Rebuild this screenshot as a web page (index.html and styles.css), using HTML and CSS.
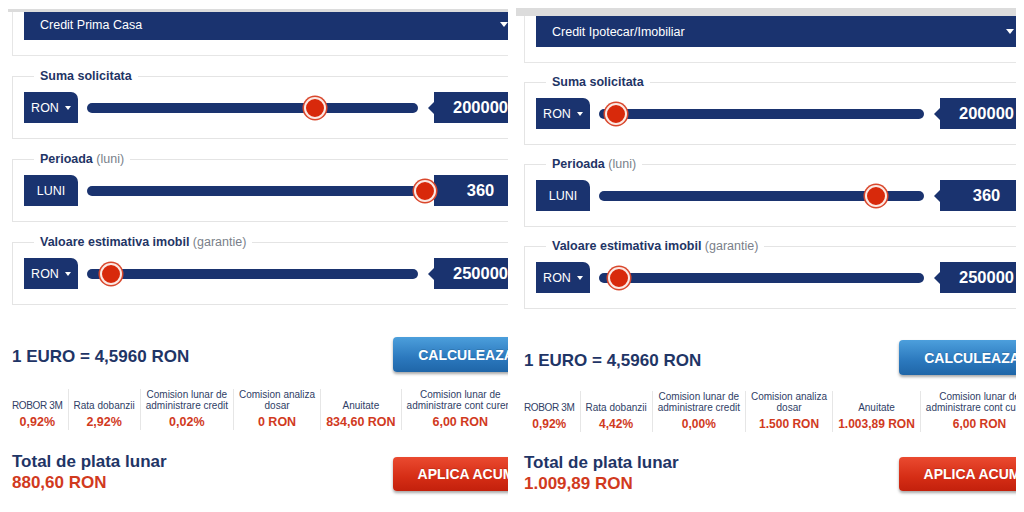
FILE: index.html
```html
<!DOCTYPE html>
<html lang="ro">
<head>
<meta charset="utf-8">
<title>Calculator credit</title>
<link rel="stylesheet" href="styles.css">
</head>
<body>
<div class="screen">
  <section class="panel panel--a">
    <div class="topbar"></div>
    <div class="calc">
      <div class="selectbox">
        <div class="select"><span>Credit Prima Casa</span><span class="select__arrow"></span></div>
      </div>
      <fieldset class="field">
        <legend><b>Suma solicitata</b></legend>
        <div class="slider-row">
          <div class="unit">RON <span class="caret"></span></div>
          <div class="track"><span class="thumb" style="left:68.9%"></span></div>
          <div class="value">200000</div>
        </div>
      </fieldset>
      <fieldset class="field">
        <legend><b>Perioada</b> <span class="muted">(luni)</span></legend>
        <div class="slider-row">
          <div class="unit">LUNI</div>
          <div class="track"><span class="thumb" style="left:102.1%"></span></div>
          <div class="value">360</div>
        </div>
      </fieldset>
      <fieldset class="field">
        <legend><b>Valoare estimativa imobil</b> <span class="muted">(garantie)</span></legend>
        <div class="slider-row">
          <div class="unit">RON <span class="caret"></span></div>
          <div class="track"><span class="thumb" style="left:7.3%"></span></div>
          <div class="value">250000</div>
        </div>
      </fieldset>
      <div class="rate-row">
        <div class="rate">1 EURO = 4,5960 RON</div>
        <button class="btn btn--blue">CALCULEAZA</button>
      </div>
      <div class="stats">
        <div class="stat"><div class="stat__label stat__label--tight">ROBOR 3M</div><div class="stat__val">0,92%</div></div>
        <div class="stat"><div class="stat__label">Rata dobanzii</div><div class="stat__val">2,92%</div></div>
        <div class="stat"><div class="stat__label">Comision lunar de<br>administrare credit</div><div class="stat__val">0,02%</div></div>
        <div class="stat"><div class="stat__label">Comision analiza<br>dosar</div><div class="stat__val">0 RON</div></div>
        <div class="stat"><div class="stat__label">Anuitate</div><div class="stat__val">834,60 RON</div></div>
        <div class="stat"><div class="stat__label">Comision lunar de<br>administrare cont curent</div><div class="stat__val">6,00 RON</div></div>
      </div>
      <div class="total-row">
        <div class="total">
          <div class="total__label">Total de plata lunar</div>
          <div class="total__val">880,60 RON</div>
        </div>
        <button class="btn btn--red">APLICA ACUM</button>
      </div>
    </div>
  </section>

  <section class="panel panel--b">
    <div class="topbar"></div>
    <div class="calc">
      <div class="selectbox">
        <div class="select"><span>Credit Ipotecar/Imobiliar</span><span class="select__arrow"></span></div>
      </div>
      <fieldset class="field">
        <legend><b>Suma solicitata</b></legend>
        <div class="slider-row">
          <div class="unit">RON <span class="caret"></span></div>
          <div class="track"><span class="thumb" style="left:5.2%"></span></div>
          <div class="value">200000</div>
        </div>
      </fieldset>
      <fieldset class="field">
        <legend><b>Perioada</b> <span class="muted">(luni)</span></legend>
        <div class="slider-row">
          <div class="unit">LUNI</div>
          <div class="track"><span class="thumb" style="left:85.3%"></span></div>
          <div class="value">360</div>
        </div>
      </fieldset>
      <fieldset class="field">
        <legend><b>Valoare estimativa imobil</b> <span class="muted">(garantie)</span></legend>
        <div class="slider-row">
          <div class="unit">RON <span class="caret"></span></div>
          <div class="track"><span class="thumb" style="left:6.1%"></span></div>
          <div class="value">250000</div>
        </div>
      </fieldset>
      <div class="rate-row">
        <div class="rate">1 EURO = 4,5960 RON</div>
        <button class="btn btn--blue">CALCULEAZA</button>
      </div>
      <div class="stats">
        <div class="stat"><div class="stat__label stat__label--tight">ROBOR 3M</div><div class="stat__val">0,92%</div></div>
        <div class="stat"><div class="stat__label">Rata dobanzii</div><div class="stat__val">4,42%</div></div>
        <div class="stat"><div class="stat__label">Comision lunar de<br>administrare credit</div><div class="stat__val">0,00%</div></div>
        <div class="stat"><div class="stat__label">Comision analiza<br>dosar</div><div class="stat__val">1.500 RON</div></div>
        <div class="stat"><div class="stat__label">Anuitate</div><div class="stat__val">1.003,89 RON</div></div>
        <div class="stat"><div class="stat__label">Comision lunar de<br>administrare cont curent</div><div class="stat__val">6,00 RON</div></div>
      </div>
      <div class="total-row">
        <div class="total">
          <div class="total__label">Total de plata lunar</div>
          <div class="total__val">1.009,89 RON</div>
        </div>
        <button class="btn btn--red">APLICA ACUM</button>
      </div>
    </div>
  </section>
</div>
</body>
</html>
```

FILE: styles.css
```css
* { box-sizing: border-box; }

html, body {
  margin: 0;
  padding: 0;
  background: #ffffff;
}

body {
  font-family: "Liberation Sans", Arial, Helvetica, sans-serif;
  color: #1f3566;
}

.screen {
  display: flex;
  width: 1024px;
  height: 512px;
  overflow: hidden;
  background: #ffffff;
}

.panel {
  position: relative;
  flex: none;
  height: 512px;
  overflow: hidden;
}

.panel--a {
  width: 508px;
  padding-top: 9px;
}

.panel--b {
  width: 504px;
  margin-left: 4px;
  padding-top: 16px;
}

.topbar {
  position: absolute;
  right: 0;
  background: #dcdcdc;
  z-index: 3;
}

.panel--a .topbar { left: 8px; top: 9px; height: 3px; }
.panel--b .topbar { left: 4px; top: 8px; height: 8px; }

.calc {
  margin-left: 12px;
}

.panel--a .calc { width: 527px; }
.panel--b .calc { width: 521px; }

/* product select */
.selectbox {
  border: 1px solid #e6e6e6;
  border-top: none;
  padding: 0 11px 15px;
}

.select {
  display: flex;
  align-items: center;
  justify-content: space-between;
  width: calc(100% - 3px);
  height: 31px;
  padding: 0 16px 0 16px;
  background: #1a336f;
  color: #ffffff;
  font-size: 12.5px;
}

.select__arrow {
  width: 0;
  height: 0;
  border-left: 4px solid transparent;
  border-right: 4px solid transparent;
  border-top: 5px solid #ffffff;
}

/* slider fieldsets */
.field {
  margin: 12px 0 0;
  padding: 8px 11px 15px;
  border: 1px solid #e4e4e4;
  min-width: 0;
}

.panel--b .field { margin-top: 11px; }

.field legend {
  margin-left: 10px;
  padding: 0 6px;
  font-size: 12.5px;
  line-height: 16px;
  color: #1f3566;
}

.muted {
  color: #7a7f8a;
  font-weight: normal;
}

.slider-row {
  display: flex;
  align-items: center;
  height: 31px;
}

.unit {
  flex: none;
  width: 54px;
  height: 31px;
  display: flex;
  align-items: center;
  justify-content: center;
  gap: 6px;
  background: #1a336f;
  color: #ffffff;
  font-size: 12.5px;
  border-top-right-radius: 7px;
}

.caret {
  width: 0;
  height: 0;
  border-left: 3.5px solid transparent;
  border-right: 3.5px solid transparent;
  border-top: 4px solid #ffffff;
}

.track {
  position: relative;
  flex: 1;
  height: 10px;
  margin: 0 16px 0 9px;
  border-radius: 5px;
  background: #1a336f;
}

.thumb {
  position: absolute;
  top: 50%;
  width: 22px;
  height: 22px;
  transform: translate(-50%, -50%);
  border-radius: 50%;
  background: #d8290b;
  border: 2px solid #fbe9e4;
  box-shadow: 0 0 0 1.5px #d9472c;
  z-index: 2;
}

.value {
  position: relative;
  flex: none;
  width: 93px;
  height: 31px;
  display: flex;
  align-items: center;
  justify-content: center;
  background: #1a336f;
  color: #ffffff;
  font-weight: bold;
  font-size: 16.5px;
}

.value::before {
  content: "";
  position: absolute;
  left: -6px;
  top: 50%;
  margin-top: -6px;
  border-top: 6px solid transparent;
  border-bottom: 6px solid transparent;
  border-right: 6px solid #1a336f;
}

/* exchange rate + calculate */
.rate-row {
  display: flex;
  justify-content: space-between;
  align-items: flex-start;
  margin-top: 32px;
}

.panel--b .rate-row { margin-top: 31px; }

.rate {
  margin-top: 10px;
  font-size: 17px;
  line-height: 20px;
  font-weight: bold;
  color: #1f3566;
}

.panel--b .rate { margin-top: 11px; }

.btn {
  flex: none;
  width: 146px;
  border: none;
  border-radius: 4px;
  color: #ffffff;
  font-family: "Liberation Sans", Arial, Helvetica, sans-serif;
  font-weight: bold;
  font-size: 14px;
  text-align: center;
  box-shadow: 0 2px 3px rgba(0, 0, 0, 0.35);
  text-shadow: 0 -1px 0 rgba(0, 0, 0, 0.15);
  padding: 0;
}

.btn--blue {
  height: 35px;
  background: linear-gradient(#4c9fdc, #2b78bd 60%, #1f66a8);
}

.btn--red {
  height: 34px;
  margin-top: 5px;
  background: linear-gradient(#ea4a30, #d52d15 60%, #c3200c);
}

.panel--b .btn--red { margin-top: 4px; }

/* stats table */
.stats {
  display: flex;
  margin-top: 17px;
}

.panel--b .stats { margin-top: 16px; }

.stat {
  flex: none;
  padding: 0 5px;
  border-left: 1px solid #e6e6e6;
  text-align: center;
  white-space: nowrap;
}

.stat:first-child {
  padding-left: 0;
  border-left: none;
}

.stat__label {
  height: 22px;
  display: flex;
  flex-direction: column;
  justify-content: flex-end;
  font-size: 10px;
  line-height: 11px;
  color: #2f4066;
}

.stat__label--tight {
  letter-spacing: -0.35px;
}

.stat__val {
  margin-top: 3px;
  font-size: 12.5px;
  line-height: 16px;
  font-weight: bold;
  color: #d13a1e;
}

.panel--b .stat__val { font-size: 12px; }

/* total */
.total-row {
  display: flex;
  justify-content: space-between;
  align-items: flex-start;
  margin-top: 22px;
}

.panel--b .total-row { margin-top: 21px; }

.total__label {
  font-size: 17px;
  line-height: 20px;
  font-weight: bold;
  color: #1f3566;
}

.total__val {
  margin-top: 1px;
  font-size: 17px;
  line-height: 20px;
  font-weight: bold;
  color: #d13a1e;
}
```
